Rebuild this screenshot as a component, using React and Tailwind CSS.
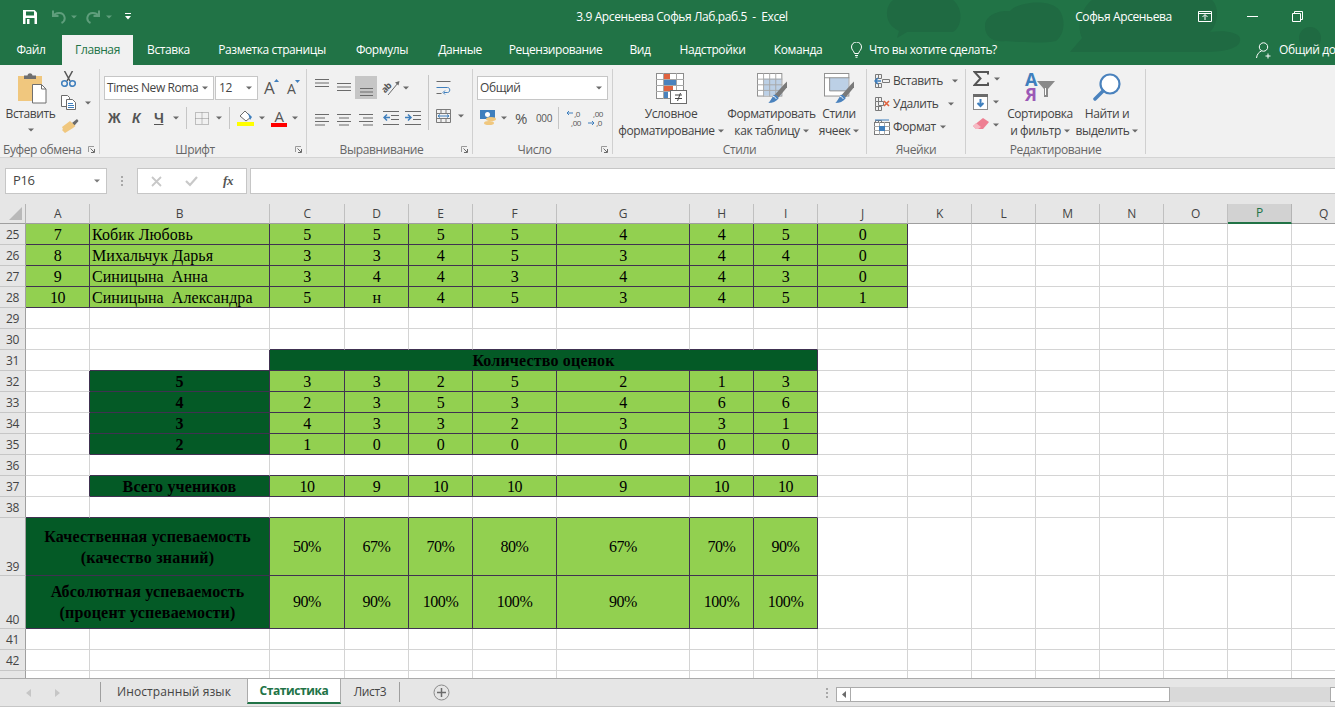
import React from "react";

const COLS = ["A","B","C","D","E","F","G","H","I","J","K","L","M","N","O","P","Q"];
const ROWS = [25,26,27,28,29,30,31,32,33,34,35,36,37,38,39,40,41,42,43];
const DATA = {
  25: ["7","Кобик Любовь","5","5","5","5","4","4","5","0"],
  26: ["8","Михальчук Дарья","3","3","4","5","3","4","4","0"],
  27: ["9","Синицына  Анна","3","4","4","3","4","4","3","0"],
  28: ["10","Синицына  Александра","5","н","4","5","3","4","5","1"],
  32: ["","5","3","3","2","5","2","1","3"],
  33: ["","4","2","3","5","3","4","6","6"],
  34: ["","3","4","3","3","2","3","3","1"],
  35: ["","2","1","0","0","0","0","0","0"],
  37: ["","Всего учеников","10","9","10","10","9","10","10"],
  39: ["","","50%","67%","70%","80%","67%","70%","90%"],
  40: ["","","90%","90%","100%","100%","90%","100%","100%"],
};

function fillOf(r, c) {
  if (r >= 25 && r <= 28) return c <= 9 ? "l" : "";
  if (r === 31) return c >= 2 && c <= 8 ? "d" : "";
  if ((r >= 32 && r <= 35) || r === 37) {
    if (c === 1) return "d";
    return c >= 2 && c <= 8 ? "l" : "";
  }
  if (r === 39 || r === 40) {
    if (c <= 1) return "d";
    return c <= 8 ? "l" : "";
  }
  return "";
}

function Caret({ className = "", color = "#6a6a6a" }) {
  return (
    <svg width="6" height="4" viewBox="0 0 6 4" className={`shrink-0 ${className}`}>
      <path d="M0 0.5h6L3 3.5z" fill={color} />
    </svg>
  );
}

function Launcher() {
  return (
    <svg width="7" height="7" viewBox="0 0 7 7" className="absolute right-[4px] top-[3px]">
      <path d="M0.5 6V0.5H6" stroke="#9a9a9a" fill="none" />
      <path d="M2.500 2.500l3.500 3.500M6.500 3v3.500H3" stroke="#6a6a6a" fill="none" />
    </svg>
  );
}

function Group({ className, label, launcher, children }) {
  return (
    <div className={`shrink-0 mt-[4px] h-[85px] border-r border-[#d0d0d0] flex flex-col ${className}`}>
      <div className="h-[73px] shrink-0 flex">{children}</div>
      <div className={`relative mt-[1px] h-[14px] shrink-0 leading-[14px] text-center text-[#666666] whitespace-nowrap ${launcher ? "pr-[16px]" : ""}`}>
        {label}
        {launcher && <Launcher />}
      </div>
    </div>
  );
}

function AlignIcon({ lines, top }) {
  return (
    <svg width="15" height="15" viewBox="0 0 15 15" className="shrink-0 overflow-visible">
      {lines.map((l, i) => (
        <path key={i} d={`M${l[0]} ${top + i * 3.5 + 0.5}H${l[1]}`} stroke="#6b6b6b" />
      ))}
    </svg>
  );
}

function Sep({ className = "h-[22px]" }) {
  return <div className={`w-px bg-[#c6c6c6] shrink-0 ${className}`} />;
}

function LargeBtn({ className, icon, l1, l2 }) {
  return (
    <div className={`shrink-0 flex flex-col items-center text-[#444444] ${className}`}>
      <div className="h-[37px] pt-[4px] flex justify-center">{icon}</div>
      <div className="leading-[16px] whitespace-nowrap">{l1}</div>
      <div className="leading-[17px] whitespace-nowrap flex items-center">
        {l2}
        <Caret className="ml-[3px]" />
      </div>
    </div>
  );
}

function TableIcon({ wide = false }) {
  return (
    <svg width="30" height="32" viewBox="0 0 32 34">
      <rect x="0.5" y="0.5" width="26" height="24" fill="#ffffff" stroke="#8c8c8c" />
      {wide ? (
        <rect x="6" y="5" width="20" height="14" fill="#bcd0e6" />
      ) : (
        <rect x="7" y="6" width="19" height="18" fill="#bcd0e6" />
      )}
      {wide ? (
        <path d="M0 5h27M6 5v14h20" stroke="#8c8c8c" fill="none" />
      ) : (
        <path d="M0 6.5h27M0 12.5h27M0 18.5h27M7 0v25M13.5 0v25M20 0v25" stroke="#a8a8a8" fill="none" />
      )}
      <path d="M29 12l3-3v6l-9 11-4-3z" fill="#7a7a7a" />
      <path d="M18 23c3 0 5 2 5 4-3 3-6 5-11 5 1-1 3-4 6-9z" fill="#4a82bd" />
      <path d="M17 25c1.5 0 3 1 3.5 2.5" stroke="#ffffff" fill="none" />
    </svg>
  );
}

function CFIcon() {
  return (
    <svg width="31" height="31" viewBox="0 0 31 31">
      <rect x="0.5" y="0.5" width="27" height="25" fill="#ffffff" stroke="#8c8c8c" />
      <path d="M0 6.5h28M0 12.5h28M0 18.5h28M7.5 0v26M20.5 0v26" stroke="#a8a8a8" />
      <rect x="8" y="1" width="6" height="5" fill="#e0633f" />
      <rect x="8" y="7" width="12" height="5" fill="#4a82bd" />
      <rect x="8" y="13" width="9" height="5" fill="#e0633f" />
      <rect x="8" y="19" width="4" height="6" fill="#4a82bd" />
      <rect x="14.5" y="17.5" width="16" height="13" fill="#ffffff" stroke="#6b6b6b" />
      <path d="M19 22h7M19 25.5h7M24.5 20l-3 8" stroke="#444444" />
    </svg>
  );
}

function CellIcon({ kind }) {
  return (
    <svg width="16" height="16" viewBox="0 0 16 16" className="shrink-0">
      <path d="M1.5 1.5h6v4h-6zM1.5 10.5h6v4h-6zM1.5 5.5v5M4.5 1.5v4M4.5 10.5v4" stroke="#7a7a7a" fill="none" />
      {kind === "ins" && <><path d="M8.5 6.5h7v3h-7z" stroke="#7a7a7a" fill="none" /><path d="M7 8H1M4 5L1 8l3 3" stroke="#3f7fbd" strokeWidth="1.5" fill="none" /></>}
      {kind === "del" && <><path d="M4.5 5.5h5v4h-5z" stroke="#7a7a7a" fill="none" /><path d="M10 5l5 5M15 5l-5 5" stroke="#e0633f" strokeWidth="1.6" /></>}
      {kind === "fmt" && <><rect x="0.5" y="3.5" width="15" height="12" fill="#ffffff" stroke="#7a7a7a" /><path d="M0 7.5h16M0 11.5h16M5.5 3v13M10.5 3v13" stroke="#a8a8a8" /><rect x="5" y="7" width="6" height="5" fill="#3f7fbd" /><path d="M1 1h14" stroke="#3f7fbd" /></>}
    </svg>
  );
}

function TitleBlobs() {
  return (
    <svg width="450" height="52" viewBox="0 0 450 52" className="absolute right-0 top-0 pointer-events-none">
      <g fill="#1f6a42">
        <path d="M8 0h60c10 8 10 26 0 32H22l-10 6 2-7C-2 24 0 6 8 0z" />
        <path d="M100 26c0-10 12-16 25-15 6-8 40-14 50 0 6 10 4 24-4 30-10 2-30 2-50 0-14 2-21-5-21-15z" />
        <path d="M185 52l12-14c-6-14 0-30 10-38h120c8 8 6 24-2 32 14-2 28 0 30 6 2 10-14 14-36 14z" />
        <circle cx="425" cy="38" r="11" />
      </g>
    </svg>
  );
}

const TABS = [
  ["w-[62px]", "Файл"],
  ["w-[71px] bg-[#f1f1f1] text-[#217346]", "Главная"],
  ["w-[71px]", "Вставка"],
  ["w-[136px]", "Разметка страницы"],
  ["w-[84px]", "Формулы"],
  ["w-[72px]", "Данные"],
  ["w-[119px]", "Рецензирование"],
  ["w-[50px]", "Вид"],
  ["w-[95px]", "Надстройки"],
  ["w-[76px]", "Команда"],
];

function Sheet() {
  const cells = [];
  cells.push(
    <div key="corner" className="bg-[#e6e6e6] border-r border-b border-r-[#b4b4b4] border-b-[#9f9f9f] flex items-end justify-end pr-[3px] pb-[3px]">
      <svg width="13" height="13" viewBox="0 0 13 13"><path d="M13 0v13H0z" fill="#b9b9b9" /></svg>
    </div>
  );
  COLS.forEach((c) => {
    const sel = c === "P";
    cells.push(
      <div
        key={c}
        className={`flex items-center justify-center text-[12px] ${
          sel
            ? "bg-[#d2d2d2] text-[#217346] border-b-2 border-b-[#217346] border-r border-r-[#b4b4b4]"
            : "bg-[#e6e6e6] text-[#444444] border-r border-b border-r-[#c0c0c0] border-b-[#9f9f9f]"
        }`}
      >
        {c}
      </div>
    );
  });

  ROWS.forEach((r, ri) => {
    const tall = r === 39 || r === 40;
    cells.push(
      <div
        key={`h${r}`}
        className={`bg-[#e6e6e6] text-[#444444] text-[12px] border-r border-b border-r-[#9f9f9f] border-b-[#c6c6c6] flex justify-center ${tall ? "items-end leading-[16px]" : "items-center pt-[2px]"}`}
      >
        {r === 43 ? "" : r}
      </div>
    );
    let c = 0;
    while (c < COLS.length) {
      const f = fillOf(r, c);
      let span = 1;
      let cls = "";
      if (r === 31 && c === 2) { span = 7; cls = "col-span-7"; }
      if (tall && c === 0) { span = 2; cls = "col-span-2"; }
      const end = c + span - 1;
      const below = ri + 1 < ROWS.length ? fillOf(ROWS[ri + 1], c) : "";
      const rightDark = f || fillOf(r, end + 1);
      const bottomDark = f || below;
      const bg = f === "l" ? "bg-[#92d050]" : f === "d" ? "bg-[#045a26]" : "bg-white";
      const br = rightDark ? "border-r-[#403151]" : "border-r-[#d4d4d4]";
      const bb = bottomDark ? "border-b-[#403151]" : "border-b-[#d4d4d4]";
      let content = null;
      let extra = "justify-center text-center";
      if (r === 31 && c === 2) { content = "Количество оценок"; extra += " font-bold tracking-[0.17px]"; }
      else if (tall && c === 0) {
        extra += " font-bold leading-[21px] tracking-[0.2px]";
        content = r === 39
          ? <span>Качественная успеваемость<br />(качество знаний)</span>
          : <span>Абсолютная успеваемость<br />(процент успеваемости)</span>;
      } else if (DATA[r] && DATA[r][c]) {
        content = DATA[r][c];
        if (r <= 28 && c === 1) extra = "justify-start pl-[2px] tracking-[0.05px]";
        if (r > 28 && c === 1) extra += " font-bold tracking-[0.15px]";
      }
      cells.push(
        <div
          key={`${r}-${c}`}
          className={`${cls} ${bg} ${br} ${bb} border-r border-b flex items-center whitespace-pre text-[16px] text-black font-['Liberation_Serif',serif] ${tall ? "" : "pt-[2px]"} ${extra}`}
        >
          {content}
        </div>
      );
      c += span;
    }
  });

  return (
    <div className="h-[474px] shrink-0 overflow-hidden bg-white">
      <div className="grid grid-cols-[26px_64px_180px_75px_64px_64px_84px_133px_64px_64px_90px_64px_64px_64px_64px_64px_64px_64px] grid-rows-[20px_repeat(14,21px)_58px_53px_21px_21px_21px]">
        {cells}
      </div>
    </div>
  );
}

export default function App() {
  return (
    <div className="w-[1335px] h-[707px] overflow-hidden flex flex-col font-['Open_Sans',sans-serif] text-[12px] tracking-[-0.4px] text-[#444444] bg-[#e6e6e6]">
      {/* Title + tabs */}
      <div className="relative bg-[#217346] text-white shrink-0">
        <TitleBlobs />
        <div className="relative h-[33px] mb-[2px] flex items-center">
          <div className="w-[482px] shrink-0 flex items-center pl-[22px]">
            <svg width="16" height="16" viewBox="0 0 16 16">
              <path d="M1 1h11.5L15 3.5V15H1z" fill="#ffffff" />
              <rect x="4" y="2.5" width="8" height="4" fill="#217346" />
              <rect x="3.5" y="9" width="9" height="6" fill="#217346" />
              <rect x="5" y="10" width="2.5" height="5" fill="#ffffff" />
            </svg>
            <svg width="15" height="15" viewBox="0 0 15 15" className="ml-[13px]">
              <path d="M2 1.5V7h5.5M2.5 7C4 3.5 12 2 13.5 8c.6 2.5-1 5-3 6" stroke="#5f9e7c" strokeWidth="2" fill="none" />
            </svg>
            <Caret className="ml-[5px]" color="#5f9e7c" />
            <svg width="15" height="15" viewBox="0 0 15 15" className="ml-[9px]">
              <path d="M13 1.5V7H7.5M12.5 7C11 3.5 3 2 1.5 8c-.6 2.5 1 5 3 6" stroke="#5f9e7c" strokeWidth="2" fill="none" />
            </svg>
            <Caret className="ml-[5px]" color="#5f9e7c" />
            <svg width="6" height="7" viewBox="0 0 6 7" className="ml-[13px]">
              <path d="M0 .5h6" stroke="#ffffff" />
              <path d="M0 3h6L3 6.5z" fill="#ffffff" />
            </svg>
          </div>
          <div className="w-[400px] shrink-0 text-center whitespace-pre">3.9 Арсеньева Софья Лаб.раб.5  -  Excel</div>
          <div className="ml-[184px] w-[115px] shrink-0 text-center whitespace-nowrap">Софья Арсеньева</div>
          <svg width="14" height="11" viewBox="0 0 14 11" className="ml-[17px] shrink-0">
            <path d="M.5.5h13v10H.5zM.5 2.5h13M7 9V4M4.5 6L7 3.5 9.5 6" stroke="#ffffff" fill="none" />
          </svg>
          <div className="ml-[35px] w-[11px] h-px bg-white shrink-0" />
          <svg width="11" height="11" viewBox="0 0 11 11" className="ml-[34px] shrink-0">
            <path d="M.5 2.5h8v8h-8zM2.5 2.5v-2h8v8h-2" stroke="#ffffff" fill="none" />
          </svg>
        </div>
        <div className="relative h-[30px] flex items-stretch">
          {TABS.map(([cls, t]) => (
            <div key={t} className={`shrink-0 flex items-center justify-center whitespace-nowrap ${cls}`}>{t}</div>
          ))}
          <div className="ml-[15px] w-[405px] shrink-0 flex items-center">
            <svg width="11" height="16" viewBox="0 0 11 16">
              <path d="M3.5 11.5C3 9 .5 8 .5 5a5 5 0 0 1 10 0c0 3-2.500 4-3 6.500zM4 13.500h3M4.500 15.200h2" stroke="#ffffff" fill="none" />
            </svg>
            <span className="ml-[7px] whitespace-nowrap">Что вы хотите сделать?</span>
          </div>
          <div className="flex items-center whitespace-nowrap">
            <svg width="17" height="17" viewBox="0 0 17 17" className="shrink-0">
              <circle cx="7.500" cy="5" r="4.200" stroke="#ffffff" fill="none" />
              <path d="M.5 16c.5-4 2.500-6 5-7M12 11.500v5M9.500 14h5" stroke="#ffffff" fill="none" />
            </svg>
            <span className="ml-[6px]">Общий до</span>
          </div>
        </div>
      </div>

      {/* Ribbon */}
      <div className="h-[93px] shrink-0 bg-[#f1f1f1] border-b border-[#d4d4d4] flex">
        <Group className="w-[100px]" label={<span className="block text-left pl-[3px]">Буфер обмена</span>} launcher>
          <div className="w-[61px] shrink-0 flex flex-col items-center">
            <svg width="30" height="32" viewBox="0 0 30 32" className="mt-[3px] ml-[5px]">
              <rect x="0" y="4" width="24" height="25" fill="#f0c77e" />
              <path d="M6 7V3.500h3.500c.5-3 4.500-3 5 0H18V7z" fill="#6f6f6f" />
              <path d="M14.500 12.500h9l4.500 4.500v14h-13.500z" fill="#ffffff" stroke="#6f6f6f" />
              <path d="M23.500 12.500V17H28" fill="none" stroke="#6f6f6f" />
            </svg>
            <div className="leading-[16px] mt-[2px]">Вставить</div>
            <Caret className="mt-[6px]" />
          </div>
          <div className="flex flex-col">
            <svg width="15" height="16" viewBox="0 0 15 16" className="mt-[2px]">
              <path d="M3.500 0l5.500 10M11.500 0L6 10" stroke="#555555" strokeWidth="1.500" />
              <circle cx="3.500" cy="12.500" r="2.800" stroke="#3f7fbd" strokeWidth="1.500" fill="none" />
              <circle cx="11.500" cy="12.500" r="2.800" stroke="#3f7fbd" strokeWidth="1.500" fill="none" />
            </svg>
            <div className="flex items-center mt-[8px] h-[15px]">
              <svg width="16" height="15" viewBox="0 0 16 15">
                <path d="M.5.5h6l2 2v9h-8z" fill="#ffffff" stroke="#6b6b6b" />
                <path d="M5.500 4.500h6l3 3v7h-9z" fill="#ffffff" stroke="#6b6b6b" />
                <path d="M7 8.500h5M7 10.500h6M7 12.500h6" stroke="#3f7fbd" />
              </svg>
              <Caret className="ml-[8px]" />
            </div>
            <svg width="18" height="15" viewBox="0 0 18 15" className="mt-[8px]">
              <path d="M11 5l5-4 1.500 2-4.500 5z" fill="#6b6b6b" />
              <path d="M9 3l5.500 5-2.500 2-8 5-3-3 1-1-1-2z" fill="#f0c77e" />
            </svg>
          </div>
        </Group>

        <Group className="w-[207px]" label="Шрифт" launcher>
          <div className="flex flex-col">
            <div className="flex mt-[7px] h-[24px] ml-[4px] items-center">
              <div className="w-[110px] h-full bg-white border border-[#c6c6c6] flex items-center pl-[2px] pr-[5px] justify-between whitespace-nowrap overflow-hidden">
                <span>Times New Roma</span><Caret />
              </div>
              <div className="w-[43px] h-full ml-px bg-white border border-[#c6c6c6] flex items-center pl-[3px] pr-[5px] justify-between">
                <span>12</span><Caret />
              </div>
              <div className="ml-[6px] w-[17px] text-[17px] leading-[20px] tracking-normal text-[#555555] flex items-start">
                A
                <svg width="5" height="3" viewBox="0 0 5 3" className="mt-[1px] -ml-[1px]"><path d="M0 3h5L2.500 0z" fill="#3f7fbd" /></svg>
              </div>
              <div className="ml-[6px] w-[14px] text-[14px] leading-[18px] tracking-normal text-[#555555] flex items-start pt-[2px]">
                A
                <svg width="5" height="3" viewBox="0 0 5 3" className="-ml-[1px]"><path d="M0 0h5L2.500 3z" fill="#3f7fbd" /></svg>
              </div>
            </div>
            <div className="flex items-center mt-[7px] h-[22px] font-['Liberation_Sans',sans-serif] text-[#555555]">
              <span className="ml-[8px] w-[13px] text-[14px] font-bold">Ж</span>
              <span className="ml-[11px] w-[9px] text-[14px] font-bold italic">К</span>
              <span className="ml-[13px] w-[10px] text-[14px] font-bold underline">Ч</span>
              <Caret className="ml-[9px]" />
              <Sep className="h-[22px] ml-[7px]" />
              <svg width="14" height="13" viewBox="0 0 14 13" className="ml-[8px]">
                <path d="M.5.5h13v12H.5zM7 .5v12M.5 6.500h13" stroke="#8a8a8a" strokeDasharray="1 1" fill="none" />
              </svg>
              <Caret className="ml-[7px]" />
              <Sep className="h-[22px] ml-[7px]" />
              <svg width="17" height="16" viewBox="0 0 17 16" className="ml-[7px]">
                <path d="M8 1l6 6-5 4-6-5z" fill="#ffffff" stroke="#6b6b6b" />
                <path d="M11 3l4 4-2 3z" fill="#3f7fbd" />
                <rect x="0" y="12" width="17" height="4" fill="#ffff00" />
              </svg>
              <Caret className="ml-[5px]" />
              <div className="ml-[6px] w-[16px] flex flex-col items-center">
                <span className="text-[15px] leading-[14px] font-['Open_Sans',sans-serif] text-[#555555]">A</span>
                <div className="w-[16px] h-[4px] bg-[#ff0000]" />
              </div>
              <Caret className="ml-[5px]" />
            </div>
          </div>
        </Group>

        <Group className="w-[166px]" label="Выравнивание" launcher>
          <div className="w-[121px] shrink-0 flex flex-col">
            <div className="flex items-center mt-[7px] h-[23px] pl-[8px]">
              <AlignIcon top={-1} lines={[[0,14],[0,14],[0,14]]} />
              <div className="w-[7px]" />
              <AlignIcon top={3} lines={[[0,14],[0,14],[0,14]]} />
              <div className="ml-[3px] w-[22px] h-[23px] bg-[#c6c6c6] flex items-center justify-center shrink-0">
                <AlignIcon top={8} lines={[[1,14],[1,14],[1,14]]} />
              </div>
              <svg width="17" height="16" viewBox="0 0 17 16" className="ml-[6px] overflow-visible">
                <text x="0" y="11" fontSize="9" fontWeight="700" letterSpacing="-0.5" fill="#555555" fontFamily="'Open Sans',sans-serif" transform="rotate(-45 4 10)">ab</text>
                <path d="M5 15L15 3" stroke="#6b6b6b" />
                <path d="M16.500 1l-1 4.500-3.500-3z" fill="#6b6b6b" />
              </svg>
              <Caret className="ml-[3px]" />
            </div>
            <div className="flex items-center mt-[8px] h-[22px] pl-[8px]">
              <AlignIcon top={3} lines={[[0,14],[0,10],[0,14],[0,10]]} />
              <div className="w-[7px]" />
              <AlignIcon top={3} lines={[[0,14],[2,12],[0,14],[2,12]]} />
              <div className="w-[7px]" />
              <AlignIcon top={3} lines={[[0,14],[4,14],[0,14],[4,14]]} />
              <svg width="16" height="14" viewBox="0 0 16 14" className="ml-[9px]">
                <path d="M0 .5h16M8 4.500h8M8 8.500h8M0 13.500h16" stroke="#6b6b6b" />
                <path d="M7 6.500H1M4 3.500l-3 3 3 3" stroke="#3f7fbd" strokeWidth="1.500" fill="none" />
              </svg>
              <svg width="16" height="14" viewBox="0 0 16 14" className="ml-[6px]">
                <path d="M0 .5h16M8 4.500h8M8 8.500h8M0 13.500h16" stroke="#6b6b6b" />
                <path d="M0 6.500h6M3 3.500l3 3-3 3" stroke="#3f7fbd" strokeWidth="1.500" fill="none" />
              </svg>
            </div>
          </div>
          <Sep className="h-[55px] mt-[6px]" />
          <div className="flex flex-col pl-[7px]">
            <svg width="15" height="15" viewBox="0 0 15 15" className="mt-[11px]">
              <path d="M.5 1.500h14M.5 13.500h5" stroke="#6b6b6b" />
              <path d="M.5 7.500h11c3 0 3 5 0 5H8" stroke="#3f7fbd" fill="none" />
              <path d="M9 10.500l-2 2 2 2" stroke="#3f7fbd" fill="none" />
            </svg>
            <div className="flex items-center mt-[14px]">
              <svg width="15" height="14" viewBox="0 0 15 14">
                <path d="M.5.5h14v13H.5zM0 4.500h15M0 9.500h15M5 0v4M10 0v4M5 10v4M10 10v4" stroke="#7a7a7a" fill="none" />
                <path d="M2 7h11M2 7l2-1.500M2 7l2 1.500M13 7l-2-1.500M13 7l-2 1.500" stroke="#3f7fbd" fill="none" />
              </svg>
              <Caret className="ml-[7px]" />
            </div>
          </div>
        </Group>

        <Group className="w-[140px]" label="Число" launcher>
          <div className="flex flex-col">
            <div className="ml-[4px] mt-[7px] w-[131px] h-[24px] bg-white border border-[#c6c6c6] flex items-center justify-between pl-[2px] pr-[5px]">
              <span>Общий</span><Caret />
            </div>
            <div className="flex items-center mt-[7px] h-[22px]">
              <svg width="17" height="16" viewBox="0 0 17 16" className="ml-[7px]">
                <rect x="0" y="0" width="15" height="9" fill="#3f7fbd" />
                <ellipse cx="7.500" cy="4.500" rx="2.500" ry="2.500" fill="#ffffff" />
                <ellipse cx="11" cy="9" rx="5" ry="2" fill="#f0c77e" />
                <ellipse cx="9" cy="13" rx="5" ry="2" fill="#f0c77e" />
              </svg>
              <Caret className="ml-[4px]" />
              <span className="ml-[8px] w-[14px] text-[15px] leading-[18px] text-[#555555]">%</span>
              <span className="ml-[7px] w-[15px] text-[10px] text-[#555555]">000</span>
              <Sep className="h-[22px] ml-[7px]" />
              <div className="ml-[7px] w-[15px] h-[18px] flex flex-col items-end text-[8px] leading-[9px] text-[#555555]">
                <span className="pr-[1px]">,0</span><span>,00</span>
              </div>
              <svg width="7" height="6" viewBox="0 0 7 6" className="-ml-[15px] -mt-[10px]"><path d="M7 3H1M3 1L1 3l2 2" stroke="#3f7fbd" fill="none" /></svg>
              <div className="ml-[15px] w-[15px] h-[18px] flex flex-col items-end text-[8px] leading-[9px] text-[#555555]">
                <span>,00</span><span className="pr-[1px]">,0</span>
              </div>
              <svg width="7" height="6" viewBox="0 0 7 6" className="-ml-[15px] mt-[10px]"><path d="M0 3h6M4 1l2 2-2 2" stroke="#3f7fbd" fill="none" /></svg>
            </div>
          </div>
        </Group>

        <Group className="w-[254px]" label="Стили">
          <LargeBtn className="w-[116px]" icon={<CFIcon />} l1="Условное" l2="форматирование" />
          <LargeBtn className="w-[85px]" icon={<TableIcon />} l1="Форматировать" l2="как таблицу" />
          <LargeBtn className="w-[50px]" icon={<TableIcon wide />} l1="Стили" l2="ячеек" />
        </Group>

        <Group className="w-[99px]" label="Ячейки">
          <div className="flex flex-col w-full">
            <div className="h-[23px] flex items-center pl-[7px]">
              <CellIcon kind="ins" /><span className="ml-[3px]">Вставить</span><Caret className="ml-[9px]" />
            </div>
            <div className="h-[23px] flex items-center pl-[7px]">
              <CellIcon kind="del" /><span className="ml-[3px]">Удалить</span><Caret className="ml-[10px]" />
            </div>
            <div className="h-[23px] flex items-center pl-[7px]">
              <CellIcon kind="fmt" /><span className="ml-[3px]">Формат</span><Caret className="ml-[4px]" />
            </div>
          </div>
        </Group>

        <Group className="w-[180px]" label="Редактирование">
          <div className="w-[39px] shrink-0 flex flex-col -mt-[2px] pl-[7px]">
            <div className="h-[23px] flex items-center">
              <svg width="16" height="15" viewBox="0 0 16 15">
                <path d="M15 3.500V1H1.500l6 6.500-6 6.500H15v-2.500" stroke="#555555" strokeWidth="2" fill="none" />
              </svg>
              <Caret className="ml-[5px]" />
            </div>
            <div className="h-[23px] flex items-center">
              <svg width="15" height="16" viewBox="0 0 15 16">
                <rect x="0.500" y="0.500" width="14" height="15" fill="#ffffff" stroke="#8a8a8a" />
                <rect x="0" y="0" width="15" height="3" fill="#6b6b6b" />
                <path d="M7.500 5v7M4.500 9l3 3 3-3" stroke="#3f7fbd" strokeWidth="2" fill="none" />
              </svg>
              <Caret className="ml-[5px]" />
            </div>
            <div className="h-[23px] flex items-center">
              <svg width="16" height="14" viewBox="0 0 16 14">
                <path d="M10 0l6 4-6 7-7 0-3-3z" fill="#ee7f92" />
                <path d="M3 11l-3-3 3-3 5 4-3 2z" fill="#f6b9c3" />
              </svg>
              <Caret className="ml-[4px]" />
            </div>
          </div>
          <LargeBtn
            className="w-[70px]"
            icon={
              <svg width="31" height="28" viewBox="0 0 31 28" className="overflow-visible">
                <text x="0" y="13" fontSize="18" fontWeight="700" fill="#3f7fbd" fontFamily="'Open Sans',sans-serif">A</text>
                <text x="0" y="28" fontSize="18" fontWeight="700" fill="#9b59b6" fontFamily="'Open Sans',sans-serif">Я</text>
                <path d="M12 8h18l-7 8v8h-4v-8z" fill="#8a8a8a" />
                <path d="M20.500 15v7" stroke="#ffffff" />
              </svg>
            }
            l1="Сортировка"
            l2="и фильтр"
          />
          <LargeBtn
            className="w-[64px]"
            icon={
              <svg width="28" height="28" viewBox="0 0 28 28">
                <circle cx="17" cy="11" r="9.500" fill="#ffffff" stroke="#4a82bd" strokeWidth="2.200" />
                <path d="M2 26l8-8" stroke="#4a82bd" strokeWidth="3.500" strokeLinecap="round" />
              </svg>
            }
            l1="Найти и"
            l2="выделить"
          />
        </Group>
      </div>

      {/* Formula bar */}
      <div className="h-[46px] shrink-0 flex pt-[10px] pl-[5px] bg-[#e6e6e6]">
        <div className="w-[102px] h-[26px] bg-white border border-[#c6c6c6] flex items-center justify-between pl-[7px] pr-[6px] text-[13px]">
          <span>P16</span><Caret color="#7a7a7a" />
        </div>
        <div className="w-[30px] h-[26px] flex flex-col items-center justify-center gap-[2px]">
          <div className="w-[2px] h-[2px] bg-[#a8a8a8]" />
          <div className="w-[2px] h-[2px] bg-[#a8a8a8]" />
          <div className="w-[2px] h-[2px] bg-[#a8a8a8]" />
        </div>
        <div className="w-[110px] h-[26px] bg-white border border-[#c6c6c6] flex items-center pl-[13px]">
          <svg width="11" height="11" viewBox="0 0 11 11"><path d="M1 1l9 9M10 1l-9 9" stroke="#c8c8c8" strokeWidth="1.800" /></svg>
          <svg width="13" height="11" viewBox="0 0 13 11" className="ml-[23px]"><path d="M1 5l4 4 7-8" stroke="#c8c8c8" strokeWidth="2.200" fill="none" /></svg>
          <span className="ml-[25px] italic font-['Liberation_Serif',serif] font-bold text-[13px] text-[#555555]">fx</span>
        </div>
        <div className="flex-1 ml-[3px] h-[26px] bg-white border-y border-l border-[#c6c6c6]" />
      </div>

      <Sheet />

      {/* Sheet tabs */}
      <div className="h-[29px] shrink-0 bg-[#e6e6e6] border-t border-b border-t-[#ababab] border-b-[#c6c6c6] flex items-start">
        <div className="w-[100px] h-[27px] shrink-0 flex items-center pl-[26px]">
          <svg width="5" height="8" viewBox="0 0 5 8"><path d="M5 0v8L0 4z" fill="#c6c6c6" /></svg>
          <svg width="5" height="8" viewBox="0 0 5 8" className="ml-[24px]"><path d="M0 0v8l5-4z" fill="#c6c6c6" /></svg>
        </div>
        <div className="w-px h-[20px] mt-[3px] bg-[#9f9f9f] shrink-0" />
        <div className="w-[146px] h-[23px] leading-[26px] tracking-[0.1px] shrink-0 text-center text-[#444444] whitespace-nowrap">Иностранный язык</div>
        <div className="w-[94px] h-[25px] shrink-0 bg-white border-x border-[#ababab] border-b-[2px] border-b-[#217346] text-center font-bold text-[#217346] leading-[24px] whitespace-nowrap">Статистика</div>
        <div className="w-[58px] h-[23px] leading-[26px] shrink-0 text-center text-[#444444]">Лист3</div>
        <div className="w-px h-[20px] mt-[3px] bg-[#9f9f9f] shrink-0" />
        <svg width="17" height="17" viewBox="0 0 17 17" className="ml-[33px] mt-[5px] shrink-0">
          <circle cx="8.500" cy="8.500" r="7.500" fill="none" stroke="#8a8a8a" />
          <path d="M8.500 4v9M4 8.500h9" stroke="#6b6b6b" strokeWidth="1.500" />
        </svg>
        <div className="flex-1" />
        <div className="w-[21px] h-[27px] shrink-0 flex flex-col items-center pt-[9px] pl-[3px] gap-[2px]">
          <div className="w-[2px] h-[2px] bg-[#a8a8a8]" />
          <div className="w-[2px] h-[2px] bg-[#a8a8a8]" />
          <div className="w-[2px] h-[2px] bg-[#a8a8a8]" />
        </div>
        <div className="w-[499px] h-[15px] mt-[8px] shrink-0 flex bg-[#d9d9d9]">
          <div className="w-[15px] h-full bg-white border border-[#ababab] flex items-center justify-center">
            <svg width="4" height="7" viewBox="0 0 4 7"><path d="M4 0v7L0 3.500z" fill="#6b6b6b" /></svg>
          </div>
          <div className="w-[319px] h-full bg-white border border-l-0 border-[#ababab]" />
          <div className="flex-1" />
          <div className="w-[5px] h-full bg-white border border-r-0 border-[#ababab]" />
        </div>
      </div>
    </div>
  );
}
